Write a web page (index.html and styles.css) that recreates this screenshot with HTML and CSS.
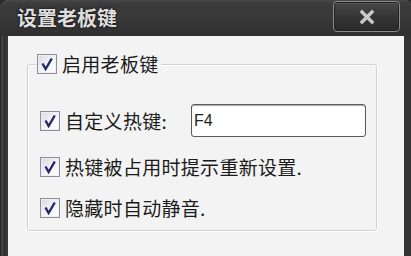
FILE: index.html
```html
<!DOCTYPE html>
<html lang="zh-CN">
<head>
<meta charset="utf-8">
<title>设置老板键</title>
<link rel="stylesheet" href="styles.css">
</head>
<body>
<div class="window">
  <div class="titlebar">
    <span class="title">设置老板键</span>
    <button class="close" type="button" aria-label="关闭">
      <svg width="16" height="16" viewBox="0 0 16 16"><path d="M3 3 L13 13 M13 3 L3 13" stroke="#c9c9c9" stroke-width="3.4" stroke-linecap="square" fill="none"/></svg>
    </button>
  </div>
  <div class="client">
    <fieldset class="group">
      <legend class="legend">
        <label class="check"><span class="box"><svg width="14" height="14" viewBox="0 0 14 14"><path d="M2.5 6.5 L5.6 12 L11.8 1.5" stroke="#27286a" stroke-width="2.4" fill="none"/></svg></span><span class="label">启用老板键</span></label>
      </legend>
      <div class="row row-hotkey">
        <label class="check"><span class="box"><svg width="14" height="14" viewBox="0 0 14 14"><path d="M2.5 6.5 L5.6 12 L11.8 1.5" stroke="#27286a" stroke-width="2.4" fill="none"/></svg></span><span class="label">自定义热键:</span></label>
        <input class="hotkey" type="text" value="F4">
      </div>
      <div class="row">
        <label class="check"><span class="box"><svg width="14" height="14" viewBox="0 0 14 14"><path d="M2.5 6.5 L5.6 12 L11.8 1.5" stroke="#27286a" stroke-width="2.4" fill="none"/></svg></span><span class="label">热键被占用时提示重新设置.</span></label>
      </div>
      <div class="row">
        <label class="check"><span class="box"><svg width="14" height="14" viewBox="0 0 14 14"><path d="M2.5 6.5 L5.6 12 L11.8 1.5" stroke="#27286a" stroke-width="2.4" fill="none"/></svg></span><span class="label">隐藏时自动静音.</span></label>
      </div>
    </fieldset>
  </div>
</div>
</body>
</html>
```

FILE: styles.css
```css
html, body {
  margin: 0;
  padding: 0;
  background: #2a2a2a;
}

.window {
  width: 411px;
  height: 256px;
  overflow: hidden;
  border-top-left-radius: 9px;
  border-top-right-radius: 6px;
  background: linear-gradient(to right, #1c1c1c 0px, #4a4a4a 2px, #2e2e2e 4px, #3a3a3a 8px, #3d3d3d 50%, #333 100%);
  box-shadow: inset 0 1px 0 #6a6a6a;
  font-family: "Noto Sans CJK SC", "Noto Sans", sans-serif;
}

.titlebar {
  height: 36px;
  display: flex;
  align-items: flex-start;
  justify-content: space-between;
  padding: 0 11px 0 17px;
  background: linear-gradient(to bottom, #484848 0px, #3b3b3b 4px, #383838 20px, #303030 36px);
  border-top-left-radius: 9px;
}

.title {
  margin-top: 6px;
  font-size: 20px;
  line-height: 24px;
  font-weight: 700;
  color: #dedede;
  text-shadow: 0 0 3px #111, 0 0 1px #000;
}

.close {
  margin-top: 1px;
  width: 67px;
  height: 31px;
  padding: 0;
  display: flex;
  align-items: center;
  justify-content: center;
  border: 1px solid #8a8a8a;
  border-radius: 4px;
  background: linear-gradient(to bottom, #484848 0%, #353535 50%, #2a2a2a 100%);
  box-shadow: inset 0 0 0 1px #222, inset 0 2px 0 #555;
}

.client {
  margin: 0 7px 0 8px;
  height: 220px;
  background: #f3f3f3;
  padding: 17px 27px 0 19px;
  box-sizing: border-box;
}

.group {
  margin: 0;
  padding: 29px 0 11px 12px;
  border: 1px solid #d2d2d2;
  border-radius: 3px;
  box-shadow: inset 1px 1px 0 #fff, 1px 1px 0 #fff;
  min-width: 0;
}

.legend {
  padding: 0 2px 0 0;
  margin-left: -3px;
}

.check {
  display: flex;
  align-items: center;
  gap: 5px;
}

.box {
  width: 18px;
  height: 18px;
  display: flex;
  align-items: center;
  justify-content: center;
  border: 1px solid #8d8d9e;
  background: linear-gradient(135deg, #d8d8e0 0%, #f7f7fa 60%, #ffffff 100%);
  box-shadow: inset 0 0 0 1px #eeeef2;
}

.label {
  font-size: 19px;
  line-height: 22px;
  color: #1b1b1b;
  letter-spacing: 0.3px;
}

.row {
  display: flex;
  align-items: center;
  margin-top: 19px;
}

.row-hotkey {
  margin-top: 0;
  gap: 24px;
}

.hotkey {
  width: 175px;
  height: 33px;
  box-sizing: border-box;
  border: 1px solid #5a5a5a;
  border-radius: 3px;
  background: #fff;
  padding: 0 0 0 2px;
  font-family: "Liberation Sans", Arial, sans-serif;
  font-size: 16px;
  color: #222;
  box-shadow: inset 0 1px 1px #aaa;
}
```
